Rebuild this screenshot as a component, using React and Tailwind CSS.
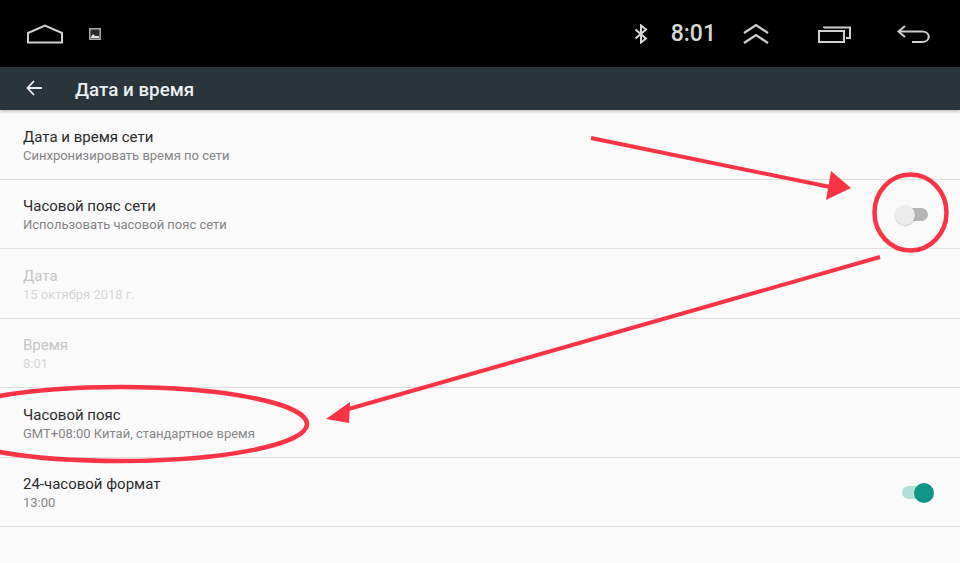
import React from "react";

const rows = [
  { t: "Дата и время сети", s: "Синхронизировать время по сети" },
  { t: "Часовой пояс сети", s: "Использовать часовой пояс сети", sw: "off" },
  { t: "Дата", s: "15 октября 2018 г.", dim: true },
  { t: "Время", s: "8:01", dim: true },
  { t: "Часовой пояс", s: "GMT+08:00 Китай, стандартное время" },
  { t: "24-часовой формат", s: "13:00", sw: "on" },
];

function Toggle({ on }) {
  return (
    <div className="relative w-[39px] h-[20px] mr-[26px] mt-[2px]">
      <div className={on ? "absolute left-[7px] top-[3px] w-[28px] h-[13px] rounded-full bg-[#b3dfd9]" : "absolute left-[5px] top-[3px] w-[28px] h-[13px] rounded-full bg-[#b5b5b5]"} />
      <div className={on ? "absolute right-0 top-0 w-[20px] h-[20px] rounded-full bg-[#0f9688]" : "absolute left-0 top-0 w-[20px] h-[20px] rounded-full bg-[#ececec] shadow-[0_1px_2px_rgba(0,0,0,0.2)]"} />
    </div>
  );
}

function Row({ t, s, dim, sw }) {
  return (
    <div className="h-[69.5px] border-b border-[#dedede] flex items-center justify-between pl-[23px]">
      <div className="flex flex-col mt-[3px]">
        <div className={dim ? "text-[15px] leading-[20px] text-[#c4c4c4]" : "text-[15px] leading-[20px] text-[#2b2b2b]"}>{t}</div>
        <div className={dim ? "text-[13px] leading-[18.5px] text-[#d6d6d6]" : "text-[13px] leading-[18.5px] text-[#858585]"}>{s}</div>
      </div>
      {sw && <Toggle on={sw === "on"} />}
    </div>
  );
}

export default function App() {
  return (
    <div className="relative w-[960px] h-[563px] overflow-hidden bg-[#fafafa] font-['Roboto',sans-serif]">
      <div className="h-[67px] bg-black flex items-center pl-[27px] pr-[30px] text-[#cfcfcf]">
        <svg width="36" height="20" viewBox="0 0 36 20" fill="none" stroke="#d0d0d0" strokeWidth="2">
          <path d="M1 9 L18 1.5 L35 9 V18.5 H1 Z" />
        </svg>
        <svg className="ml-[26px]" width="12" height="12" viewBox="0 0 12 12">
          <rect width="12" height="12" fill="#a8a8a8" />
          <rect x="1.5" y="1.5" width="9" height="9" fill="#2a2a2a" />
          <path d="M2 9 L4 6 L6 8 L10 8 V10 H2 Z" fill="#e0e0e0" />
        </svg>
        <div className="ml-auto flex items-center">
          <svg width="14" height="20" viewBox="0 0 14 20" fill="none" stroke="#d8d8d8" strokeWidth="2">
            <path d="M1.5 5.5 L12 14.5 L7 18.5 V1.5 L12 5.5 L1.5 14.5" />
          </svg>
          <span className="ml-[23px] text-[23px] leading-[28px] font-medium text-[#d8d8d8]">8:01</span>
          <svg className="ml-[27px]" width="26" height="22" viewBox="0 0 26 22" fill="none" stroke="#d0d0d0" strokeWidth="2.2">
            <path d="M1 10 L13 2 L25 10" />
            <path d="M1 20 L13 12 L25 20" />
          </svg>
          <svg className="ml-[49px]" width="33" height="18" viewBox="0 0 33 18" fill="none" stroke="#d0d0d0" strokeWidth="2">
            <rect x="1" y="6" width="25" height="11" />
            <path d="M6 3 L6 2.5 H32 V13 H28" />
          </svg>
          <svg className="ml-[46px]" width="33" height="18" viewBox="0 0 33 18" fill="none" stroke="#d0d0d0" strokeWidth="2">
            <path d="M8 1 L1.5 6.5 L8 12" />
            <path d="M2 6.5 H25 C34 6.5 34 17 25 17 H15" />
          </svg>
        </div>
      </div>
      <div className="h-[43px] bg-[#29343b] flex items-center shadow-[0_2px_3px_rgba(0,0,0,0.2)] relative">
        <svg className="ml-[26px] -mt-[1px]" width="16" height="16" viewBox="0 0 16 16" fill="none" stroke="#f0f0f0" strokeWidth="1.8">
          <path d="M16 8 H1.5 M8 1 L1.5 8 L8 15" />
        </svg>
        <span className="ml-[33px] mt-[2px] text-[18.8px] leading-[26px] font-medium text-[#eceff0]">Дата и время</span>
      </div>
      <div>
        {rows.map((r) => (
          <Row key={r.t} {...r} />
        ))}
      </div>
      <svg className="absolute inset-0 pointer-events-none" width="960" height="563" viewBox="0 0 960 563" fill="none">
        <path d="M591 138 L835 188" stroke="#fb3347" strokeWidth="4" />
        <path d="M851 188 L826 200 L831 171 Z" fill="#fb3347" />
        <path d="M880 257 L345 410" stroke="#fb3347" strokeWidth="4" />
        <path d="M326 419 L350 402 L349 423 Z" fill="#fb3347" />
        <ellipse cx="910.5" cy="212.5" rx="36" ry="38" stroke="#fb3347" strokeWidth="4.5" />
        <ellipse cx="121" cy="424" rx="186" ry="37" stroke="#fb3347" strokeWidth="4.5" />
      </svg>
    </div>
  );
}
